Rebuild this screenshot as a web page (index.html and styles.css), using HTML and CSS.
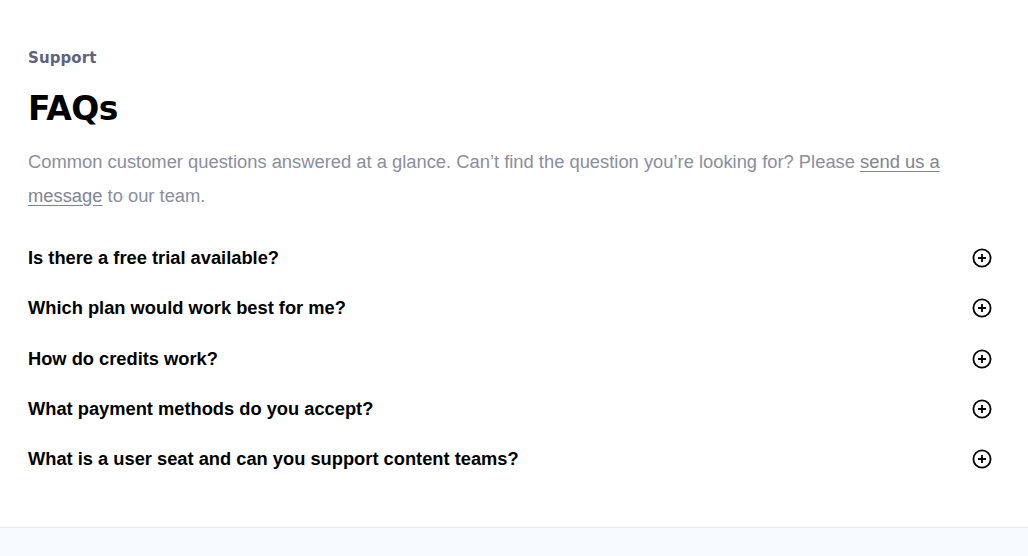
FILE: index.html
```html
<!DOCTYPE html>
<html>
<head>
<meta charset="utf-8">
<link rel="stylesheet" href="styles.css">
</head>
<body>
<section class="faq">
  <div class="eyebrow">Support</div>
  <h1 class="title">FAQs</h1>
  <p class="intro">Common customer questions answered at a glance. Can’t find the question you’re looking for? Please <a href="#">send us a message</a> to our team.</p>
  <ul class="list">
    <li class="item"><span class="q">Is there a free trial available?</span><svg class="icon" viewBox="0 0 20 20"><circle cx="10" cy="10" r="8.6" fill="none" stroke="#000" stroke-width="1.8"/><path d="M10 6v8M6 10h8" stroke="#000" stroke-width="1.8"/></svg></li>
    <li class="item"><span class="q">Which plan would work best for me?</span><svg class="icon" viewBox="0 0 20 20"><circle cx="10" cy="10" r="8.6" fill="none" stroke="#000" stroke-width="1.8"/><path d="M10 6v8M6 10h8" stroke="#000" stroke-width="1.8"/></svg></li>
    <li class="item"><span class="q">How do credits work?</span><svg class="icon" viewBox="0 0 20 20"><circle cx="10" cy="10" r="8.6" fill="none" stroke="#000" stroke-width="1.8"/><path d="M10 6v8M6 10h8" stroke="#000" stroke-width="1.8"/></svg></li>
    <li class="item"><span class="q">What payment methods do you accept?</span><svg class="icon" viewBox="0 0 20 20"><circle cx="10" cy="10" r="8.6" fill="none" stroke="#000" stroke-width="1.8"/><path d="M10 6v8M6 10h8" stroke="#000" stroke-width="1.8"/></svg></li>
    <li class="item"><span class="q">What is a user seat and can you support content teams?</span><svg class="icon" viewBox="0 0 20 20"><circle cx="10" cy="10" r="8.6" fill="none" stroke="#000" stroke-width="1.8"/><path d="M10 6v8M6 10h8" stroke="#000" stroke-width="1.8"/></svg></li>
  </ul>
</section>
<footer class="footer"></footer>
</body>
</html>
```
FILE: styles.css
```css
html, body {
  margin: 0;
  padding: 0;
  background: #fff;
}
body {
  font-family: "Liberation Sans", Arial, sans-serif;
  display: flex;
  flex-direction: column;
  min-height: 556px;
}
.faq {
  padding: 48px 36px 43px 28px;
}
.eyebrow {
  font-family: "DejaVu Sans", sans-serif;
  font-weight: bold;
  font-size: 15px;
  line-height: 20px;
  color: #5e6380;
  letter-spacing: 0.1px;
}
.title {
  margin: 21px 0 0;
  font-family: "DejaVu Sans", sans-serif;
  font-weight: bold;
  font-size: 33px;
  line-height: 40px;
  color: #000;
  letter-spacing: -0.5px;
}
.intro {
  margin: 16px 0 0;
  font-size: 18.35px;
  line-height: 34px;
  color: #8a8ea0;
}
.intro a {
  color: #7f8496;
  text-decoration: underline;
  text-underline-offset: 3px;
}
.list {
  list-style: none;
  margin: 20px 0 0;
  padding: 0;
}
.item {
  display: flex;
  align-items: center;
  justify-content: space-between;
  height: 50.3px;
}
.q {
  font-size: 18.3px;
  font-weight: bold;
  color: #000;
}
.icon {
  width: 20px;
  height: 20px;
  flex: none;
}
.footer {
  flex: 1;
  background: #f7fbfe;
  border-top: 1px solid #e4e8ef;
}
```
